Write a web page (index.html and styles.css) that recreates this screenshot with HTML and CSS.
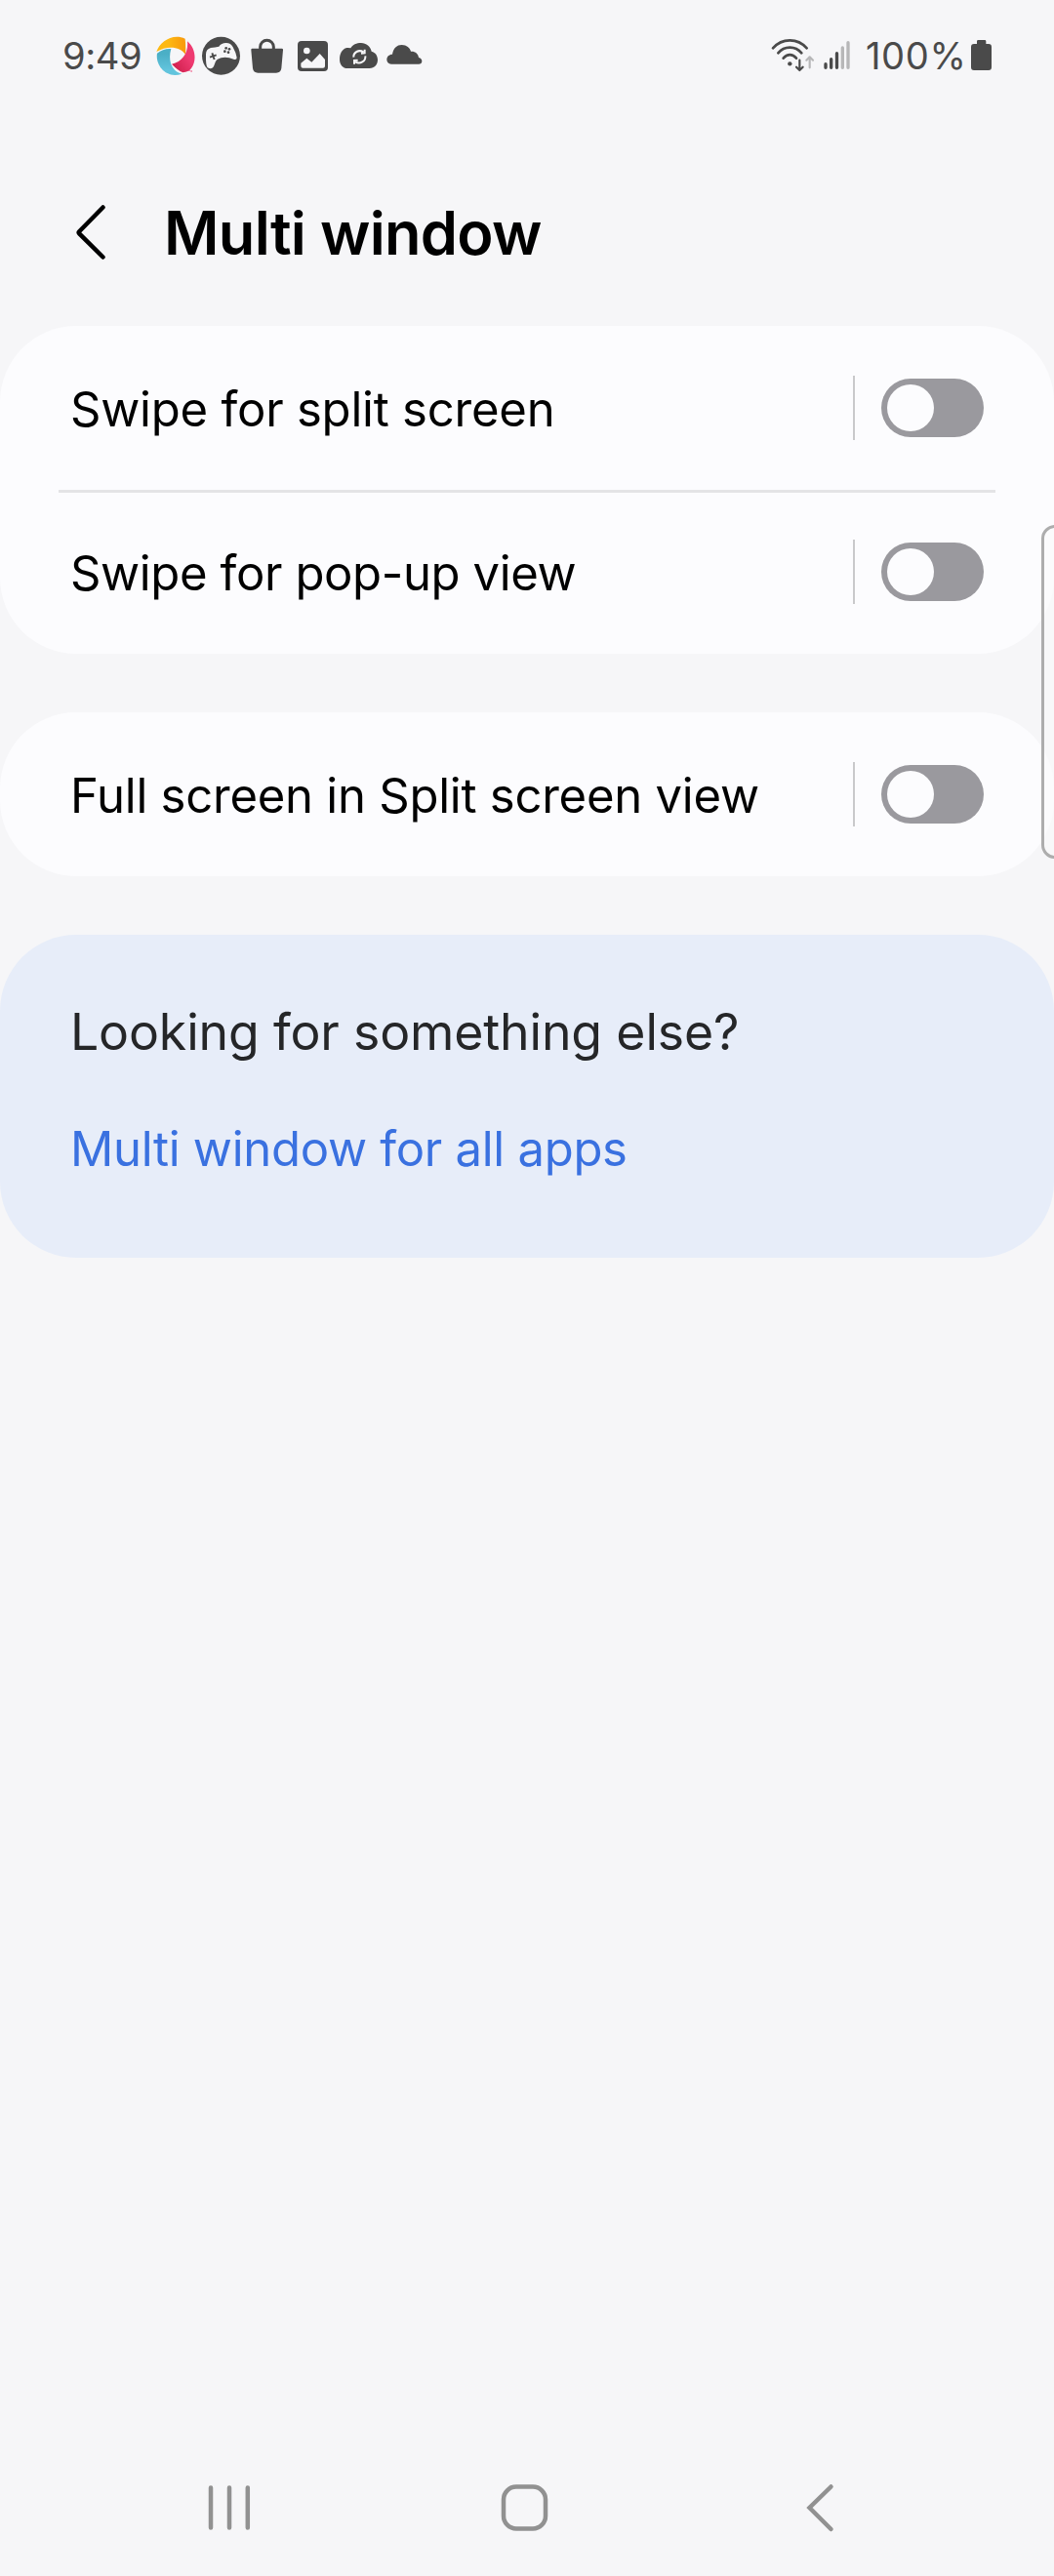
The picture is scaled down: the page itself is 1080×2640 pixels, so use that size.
FILE: index.html
```html
<!DOCTYPE html>
<html lang="en">
<head>
<meta charset="utf-8">
<title>Multi window</title>
<link rel="stylesheet" href="styles.css">
</head>
<body>
<div class="screen">
  <div class="status-bar">
    <span class="clock">9:49</span>
    <div class="notifications">
      <svg class="notification" viewBox="30 21 120 120">
        <defs>
          <linearGradient id="gold" x1="0" y1="0" x2="1" y2="0"><stop offset="0.4" stop-color="#fdb913"/><stop offset="0.9" stop-color="#f99d0c"/></linearGradient>
          <linearGradient id="rose" x1="0" y1="1" x2="1" y2="0"><stop offset="0.1" stop-color="#cf1f4c"/><stop offset="0.6" stop-color="#ee3a70"/></linearGradient>
          <linearGradient id="aqua" x1="0" y1="0" x2="0" y2="1"><stop offset="0.2" stop-color="#4bafc6"/><stop offset="0.8" stop-color="#62c4dd"/></linearGradient>
        </defs>
        <path fill="url(#gold)" d="M31 69C42 38 80 12 119 29Q122 55 120 77C104 54 66 48 31 69Z"/>
        <path fill="url(#rose)" d="M126 37C152 58 155 98 138 120Q130 131 112 133Q96 126 78 107C112 100 130 70 126 37Z"/>
        <path fill="url(#aqua)" d="M76 60C60 59 44 65 33 74C27 108 58 154 109 137C79 130 65 97 76 60Z"/>
        <path stroke="#ee3a70" stroke-width="3" d="M130 127h4M136 129h5"/>
      </svg>
      <svg class="notification" viewBox="471 51 120 120">
        <circle class="ink" cx="529.500" cy="112" r="58.500"/>
        <path class="paper" d="M483 107Q483 91 498 87Q512 85 523 83Q530 72 545 72Q560 72 566 85Q575 101 578 117Q578 125 568 122C551 114 532 114 519 122C510 128 511 139 505 147Q498 154 488 148Q482 140 483 107Z"/>
        <path class="mark" stroke-width="6" d="M495 116l20-7M502 103l7 20"/>
        <g class="ink"><circle cx="545" cy="88" r="4"/><circle cx="555" cy="91" r="4"/><circle cx="541" cy="98" r="4"/><circle cx="552" cy="101" r="4"/></g>
      </svg>
      <svg class="notification" viewBox="42 51 120 120">
        <path class="mark" stroke-width="9" d="M80 92V84a20 19.500 0 0 1 41 0V92"/>
        <path class="ink" d="M55 89H147Q151 89 150 94L145 150Q143 164 129 164H73Q59 164 57 150L52 94Q51 89 55 89Z"/>
      </svg>
      <svg class="notification" viewBox="183 51 120 120">
        <rect class="ink" x="195" y="66" width="93" height="93" rx="12"/>
        <circle class="paper" cx="223" cy="96" r="10"/>
        <path class="paper" d="M205 134L223 119L238 131L263 105L279 123V143Q279 149 273 149H211Q205 149 205 143Z"/>
      </svg>
      <svg class="notification" viewBox="324 51 120 120">
        <path class="ink" d="M349 150C333 150 324 138 324 122C324 105 332 90 346 87Q352 86 358 88C364 77 376 72 390 72C406 72 419 83 422 98C434 101 441 111 441 124C441 139 431 150 416 150Z"/>
        <path class="cutout" stroke-width="6" d="M367 116C366 101 383 91 397 100M390 104L401 103V92M403 112C405 128 387 139 372 130M380 125L369 126V137"/>
      </svg>
      <svg class="notification" viewBox="465 51 120 120">
        <path class="ink" d="M483 137C474 137 469 131 469 123C469 114 476 107 486 107C489 88 500 78 515 78C530 78 540 87 543 98C556 97 566 105 567 117C574 119 577 123 577 128C577 134 573 137 567 137Z"/>
      </svg>
    </div>
    <div class="system">
      <svg class="wifi" viewBox="54 51 144 120">
        <path class="mark round" stroke-width="8" d="M66 88C94 56 142 56 170 88M82 103C101 80 135 80 154 103M98 119C110 105 126 105 138 119"/>
        <circle class="ink" cx="118" cy="136" r="6.500"/>
        <path class="mark round" stroke-width="6.500" d="M148 125V154M138 146L148 156L158 146"/>
        <path class="faint round" stroke-width="6.500" d="M179 148V118M169 125L179 115L189 125"/>
      </svg>
      <svg class="signal" viewBox="216 51 90 120">
        <path class="mark round" stroke-width="10" d="M228 137V148M245 122V148M262.500 104V148"/>
        <path class="faint round" stroke-width="10" d="M280 87V148M297 71V148"/>
      </svg>
      <span class="charge">100%</span>
      <svg class="battery" viewBox="672 51 72 120">
        <path class="ink" d="M693 75V67Q693 63 697 63H717Q721 63 721 67V75H729Q738 75 738 84V147Q738 156 729 156H684Q675 156 675 147V84Q675 75 684 75Z"/>
      </svg>
    </div>
  </div>

  <header class="app-bar">
    <svg class="back" viewBox="0 0 36 60"><path d="M31.500 4.500L7.200 29.300Q6.200 30.300 7.200 31.300L31.500 55.500"/></svg>
    <h1 class="title">Multi window</h1>
  </header>

  <main class="settings">
    <section class="card">
      <div class="row">
        <span class="label split">Swipe for split screen</span>
        <span class="separator"></span>
        <span class="switch"><span class="knob"></span></span>
      </div>
      <div class="row">
        <span class="label popup">Swipe for pop-up view</span>
        <span class="separator"></span>
        <span class="switch"><span class="knob"></span></span>
      </div>
    </section>
    <section class="card">
      <div class="row">
        <span class="label full">Full screen in Split screen view</span>
        <span class="separator"></span>
        <span class="switch"><span class="knob"></span></span>
      </div>
    </section>
    <section class="related">
      <h2 class="question">Looking for something else?</h2>
      <a class="link">Multi window for all apps</a>
    </section>
  </main>

  <nav class="nav-bar">
    <svg class="nav-icon" viewBox="0 0 60 60"><path d="M11 9.500V50.500M30 9.500V50.500M48.800 9.500V50.500"/></svg>
    <svg class="nav-icon" viewBox="0 0 60 60"><rect x="8" y="8.500" width="43" height="43" rx="13"/></svg>
    <svg class="nav-icon" viewBox="0 0 60 60"><path d="M41.500 8.500L19.500 30L41.500 52"/></svg>
  </nav>

  <div class="edge-handle"></div>
</div>
</body>
</html>
```
FILE: styles.css
```css
* {
  box-sizing: border-box;
}

body {
  margin: 0;
  background: #f6f6f8;
  font-family: Inter, "Liberation Sans", sans-serif;
  color: #000;
}

svg {
  display: block;
  flex: none;
}

.screen {
  position: relative;
  display: flex;
  flex-direction: column;
  width: 1080px;
  height: 2640px;
  overflow: hidden;
}

/* Status bar */
.status-bar {
  display: flex;
  align-items: center;
  height: 114px;
  padding: 0 62px 0 64px;
  color: #4a4a4a;
  font-size: 38.130px;
  line-height: 48px;
}

.clock {
  width: 96px;
  letter-spacing: -0.410px;
}

.notifications {
  display: flex;
  gap: 7px;
}

.notification {
  width: 40px;
  height: 40px;
}

.system {
  display: flex;
  align-items: center;
  margin-left: auto;
}

.wifi {
  width: 48px;
  height: 40px;
}

.signal {
  width: 30px;
  height: 40px;
  margin: 0 15px 0 6px;
}

.charge {
  width: 107px;
  letter-spacing: 0.600px;
  white-space: nowrap;
}

.battery {
  width: 24px;
  height: 40px;
}

.ink {
  fill: #4a4a4a;
}

.paper {
  fill: #f6f6f8;
}

.mark {
  fill: none;
  stroke: #4a4a4a;
}

.cutout {
  fill: none;
  stroke: #f6f6f8;
}

.faint {
  fill: none;
  stroke: #b7b7b8;
}

.round {
  stroke-linecap: round;
  stroke-linejoin: round;
}

/* App bar */
.app-bar {
  display: flex;
  align-items: center;
  gap: 58px;
  height: 220px;
  padding: 28px 74px 0;
}

.back {
  width: 36px;
  height: 60px;
  fill: none;
  stroke: #000;
  stroke-width: 4.500;
  stroke-linecap: round;
}

.title {
  margin: 0;
  padding-top: 2px;
  font-size: 61.280px;
  font-weight: 600;
  line-height: 76px;
  letter-spacing: -0.690px;
}

/* Settings list */
.settings {
  display: flex;
  flex: 1;
  flex-direction: column;
  gap: 60px;
}

.card {
  border-radius: 78px;
  background: #fcfcfe;
}

.row {
  display: flex;
  align-items: center;
  height: 168px;
  padding: 0 72px;
}

.row + .row {
  background: linear-gradient(#e4e4e6, #e4e4e6) 60px 0 / 960px 3px no-repeat;
}

.label {
  flex: 1;
  padding-top: 4px;
  font-size: 49.020px;
  line-height: 60px;
}

.split {
  letter-spacing: -0.220px;
}

.popup {
  letter-spacing: -0.370px;
}

.full {
  letter-spacing: -0.240px;
}

.separator {
  width: 2px;
  height: 66px;
  margin-right: 27px;
  background: #c9c9cb;
}

.switch {
  width: 105px;
  height: 60px;
  padding: 6px;
  border-radius: 30px;
  background: #9a999e;
}

.knob {
  display: block;
  width: 48px;
  height: 48px;
  border-radius: 50%;
  background: #fcfcfe;
}

.related {
  display: flex;
  flex-direction: column;
  gap: 57px;
  height: 331px;
  padding: 67px 72px 0;
  border-radius: 78px;
  background: #e7edf9;
}

.question {
  margin: 0;
  color: #252628;
  font-size: 51.740px;
  font-weight: 400;
  line-height: 64px;
  letter-spacing: -0.140px;
}

.link {
  color: #3a71e0;
  font-size: 49.020px;
  line-height: 64px;
  letter-spacing: -0.280px;
}

/* Navigation bar */
.nav-bar {
  display: flex;
  align-items: center;
  justify-content: space-between;
  height: 140px;
  padding: 0 210px 0 205px;
}

.nav-icon {
  width: 60px;
  height: 60px;
  fill: none;
  stroke: #919191;
  stroke-width: 4.500;
  stroke-linecap: round;
}

/* Edge panel handle, floating over the list */
.edge-handle {
  position: absolute;
  top: 538px;
  right: -20px;
  width: 33px;
  height: 342px;
  border: 3px solid #adadad;
  border-radius: 14px;
  background: rgba(250, 250, 250, 0.6);
}
```
